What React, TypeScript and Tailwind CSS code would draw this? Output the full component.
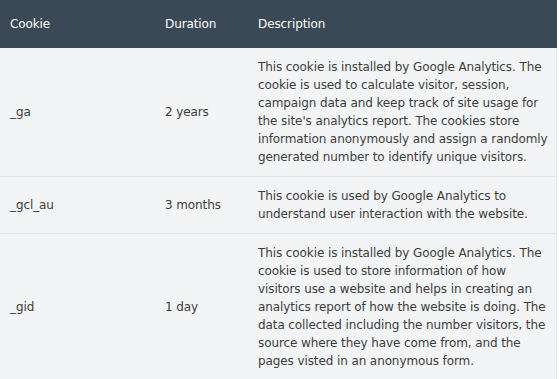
const COOKIES = [
  {
    name: '_ga',
    duration: '2 years',
    description: [
      'This cookie is installed by Google Analytics. The',
      'cookie is used to calculate visitor, session,',
      'campaign data and keep track of site usage for',
      "the site's analytics report. The cookies store",
      'information anonymously and assign a randomly',
      'generated number to identify unique visitors.',
    ],
  },
  {
    name: '_gcl_au',
    duration: '3 months',
    description: ['This cookie is used by Google Analytics to', 'understand user interaction with the website.'],
  },
  {
    name: '_gid',
    duration: '1 day',
    description: [
      'This cookie is installed by Google Analytics. The',
      'cookie is used to store information of how',
      'visitors use a website and helps in creating an',
      'analytics report of how the website is doing. The',
      'data collected including the number visitors, the',
      'source where they have come from, and the',
      'pages visted in an anonymous form.',
    ],
  },
];

export default function App() {
  return (
    <div className="w-[559px] h-[379px] bg-white font-['DejaVu_Sans',sans-serif] text-[12px] leading-[18px] tracking-[-0.1px]">
      <div className="w-[557px]">
        <div className="flex bg-[#3b4855] text-white">
          <div className="w-[155px] shrink-0 pl-[10px] py-[15px]">Cookie</div>
          <div className="w-[93px] shrink-0 pl-[10px] py-[15px]">Duration</div>
          <div className="flex-1 pl-[10px] py-[15px]">Description</div>
        </div>
        {COOKIES.map((c) => (
          <div
            key={c.name}
            className="flex items-center bg-[#f3f4f6] text-[#3d3d3d] border-b border-r border-[#e3e5e8]"
          >
            <div className="w-[155px] shrink-0 pl-[10px] py-[10px]">{c.name}</div>
            <div className="w-[93px] shrink-0 pl-[10px] py-[10px]">{c.duration}</div>
            <div className="flex-1 pl-[10px] py-[10px]">
              {c.description.map((line) => (
                <span key={line} className="block whitespace-nowrap">
                  {line}
                </span>
              ))}
            </div>
          </div>
        ))}
      </div>
    </div>
  );
}
